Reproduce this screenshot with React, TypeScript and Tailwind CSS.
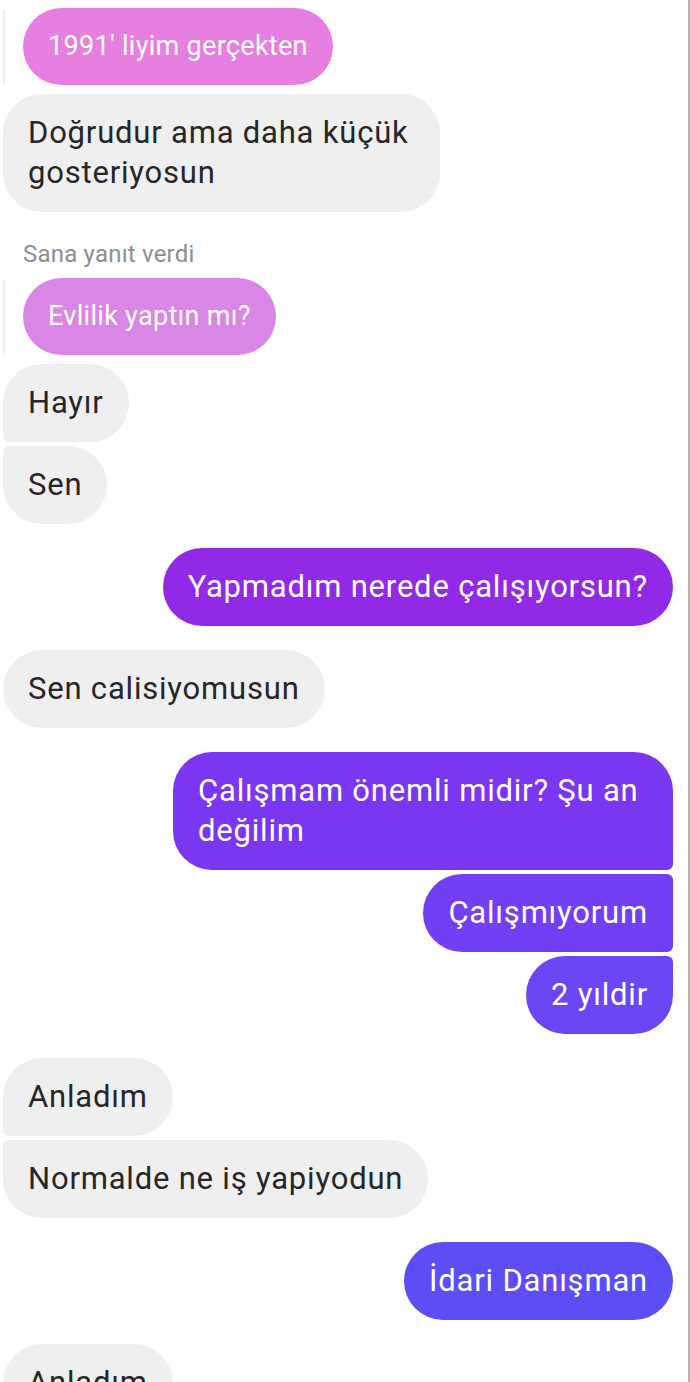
import React from "react";

type Corner = "tl" | "tr" | "bl" | "br";

function Received({ text, small = [], className = "" }: { text: React.ReactNode; small?: Corner[]; className?: string }) {
  return (
    <div className="flex justify-start pl-[3px]">
      <div
        className={[
          "rounded-[39px] bg-[#efefef] px-[25px] py-[19px] text-[31px] leading-[40px] tracking-[0.8px] text-[#262626]",
          small.includes("tl") ? "rounded-tl-[6px]" : "",
          small.includes("bl") ? "rounded-bl-[6px]" : "",
          className,
        ].join(" ")}
      >
        {text}
      </div>
    </div>
  );
}

function Sent({ text, color, small = [], className = "" }: { text: React.ReactNode; color: string; small?: Corner[]; className?: string }) {
  return (
    <div className="flex justify-end pr-[15px]">
      <div
        className={[
          "rounded-[39px] px-[25px] py-[19px] text-[31px] leading-[40px] tracking-[0.8px] text-white",
          color,
          small.includes("tr") ? "rounded-tr-[6px]" : "",
          small.includes("br") ? "rounded-br-[6px]" : "",
          className,
        ].join(" ")}
      >
        {text}
      </div>
    </div>
  );
}

function Reply({ text, color }: { text: string; color: string }) {
  return (
    <div className="flex items-stretch">
      <div className="my-[2px] ml-[3px] w-[2px] bg-[#ececec]" />
      <div className={`ml-[18px] flex h-[77px] items-center rounded-full px-[25px] text-[27px] tracking-[0.3px] text-white ${color}`}>
        {text}
      </div>
    </div>
  );
}

export default function App() {
  return (
    <div
      className="relative min-h-[1382px] w-[690px] overflow-hidden border-r-2 border-[#b4b4b4] bg-white pt-[8px]"
      style={{ fontFamily: "Roboto, 'Noto Sans', sans-serif" }}
    >
      <Reply text="1991' liyim gerçekten" color="bg-[#e77fe0]" />
      <div className="mt-[9px]">
        <Received text={<>Doğrudur ama daha küçük<br />gosteriyosun</>} className="w-[437px]" />
      </div>
      <div className="mt-[30px] pl-[23px] text-[24px] leading-[24px] tracking-[0.2px] text-[#8e8e8e]">Sana yanıt verdi</div>
      <div className="mt-[12px]">
        <Reply text="Evlilik yaptın mı?" color="bg-[#d986e6]" />
      </div>
      <div className="mt-[9px] flex flex-col gap-[4px]">
        <Received text="Hayır" small={["bl"]} />
        <Received text="Sen" small={["tl"]} />
      </div>
      <div className="mt-[24px]">
        <Sent text="Yapmadım nerede çalışıyorsun?" color="bg-[#9129e6]" />
      </div>
      <div className="mt-[24px]">
        <Received text="Sen calisiyomusun" />
      </div>
      <div className="mt-[24px] flex flex-col gap-[4px]">
        <Sent text={<>Çalışmam önemli midir? Şu an<br />değilim</>} color="bg-[#7a36f1]" small={["br"]} className="w-[500px]" />
        <Sent text="Çalışmıyorum" color="bg-[#733ff4]" small={["tr", "br"]} />
        <Sent text="2 yıldir" color="bg-[#6c46f5]" small={["tr"]} />
      </div>
      <div className="mt-[24px] flex flex-col gap-[4px]">
        <Received text="Anladım" small={["bl"]} />
        <Received text="Normalde ne iş yapiyodun" small={["tl"]} />
      </div>
      <div className="mt-[24px]">
        <Sent text="İdari Danışman" color="bg-[#5d4df5]" />
      </div>
      <div className="mt-[24px]">
        <Received text="Anladım" />
      </div>
    </div>
  );
}
